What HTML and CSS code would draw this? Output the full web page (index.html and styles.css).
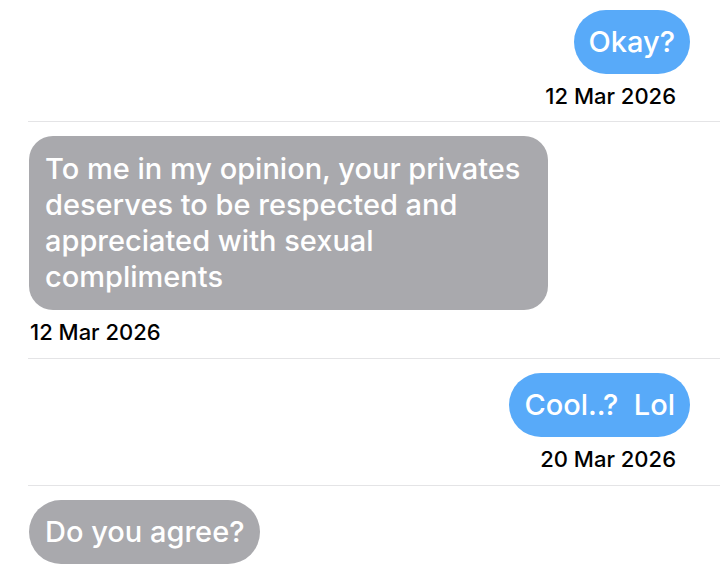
FILE: index.html
```html
<!DOCTYPE html>
<html>
<head>
<meta charset="utf-8">
<link rel="stylesheet" href="styles.css">
</head>
<body>
<div class="thread">
  <div class="group out first">
    <div class="bubble blue">Okay?</div>
    <div class="date">12 Mar 2026</div>
  </div>
  <div class="group in">
    <div class="bubble gray multi">To me in my opinion, your privates deserves to be respected and appreciated with sexual compliments</div>
    <div class="date">12 Mar 2026</div>
  </div>
  <div class="group out">
    <div class="bubble blue">Cool..?&nbsp; Lol</div>
    <div class="date">20 Mar 2026</div>
  </div>
  <div class="group in last">
    <div class="bubble gray">Do you agree?</div>
  </div>
</div>
</body>
</html>
```
FILE: styles.css
```css
html, body {
  margin: 0;
  padding: 0;
  background: #ffffff;
}
body {
  font-family: "Inter", "Roboto", "Liberation Sans", sans-serif;
  width: 720px;
  height: 571px;
  overflow: hidden;
}
.thread {
  display: flex;
  flex-direction: column;
}
.group {
  display: flex;
  flex-direction: column;
  padding: 14px 30px 13px 1px;
  margin-left: 28px;
  border-bottom: 1px solid #e4e4e6;
}
.group.first {
  padding-top: 10px;
  padding-bottom: 12px;
}
.group.last {
  border-bottom: none;
}
.group.out {
  align-items: flex-end;
}
.group.in {
  align-items: flex-start;
}
.bubble {
  font-size: 29px;
  font-weight: 500;
  line-height: 36px;
  color: #ffffff;
  padding: 14px 16px 14px 16px;
  border-radius: 32px;
  letter-spacing: 0;
}
.bubble.blue {
  background: #58aaf9;
  padding-left: 15px;
  padding-right: 15px;
}
.bubble.gray {
  background: #a9a9ad;
}
.bubble.multi {
  box-sizing: border-box;
  width: 519px;
  border-radius: 24px;
  padding-top: 15px;
  padding-bottom: 15px;
}
.date {
  font-size: 22px;
  line-height: 26px;
  color: #000000;
  margin-top: 9px;
  font-weight: 500;
}
.group.out .date {
  margin-right: 14px;
}
.group.in .date {
  margin-left: 1px;
}
```
